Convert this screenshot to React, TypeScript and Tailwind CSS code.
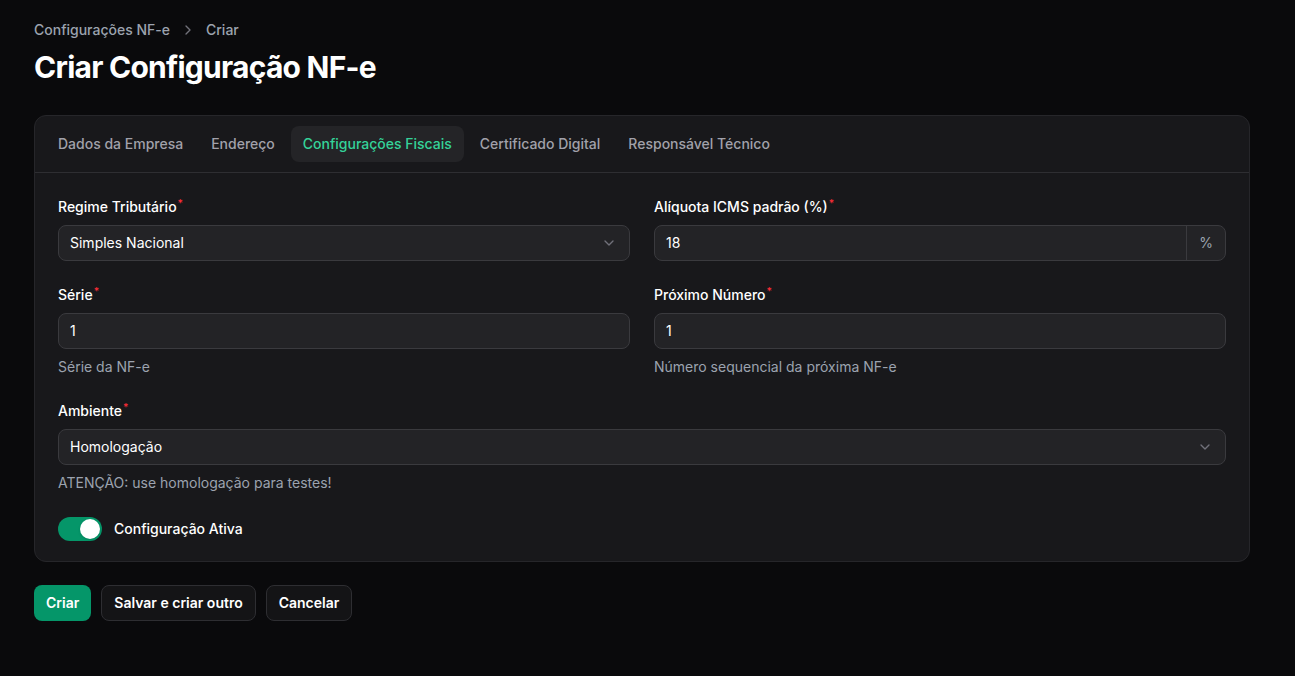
import React from 'react';
import { ChevronRight, ChevronDown } from 'lucide-react';

const tabs = ['Dados da Empresa', 'Endereço', 'Configurações Fiscais', 'Certificado Digital', 'Responsável Técnico'];

const Label: React.FC<{ text: string }> = ({ text }) => (
  <label className="block text-sm font-medium leading-5 text-white">
    {text}
    <sup className="ml-px font-medium text-red-500">*</sup>
  </label>
);

const Hint: React.FC<{ text: string }> = ({ text }) => (
  <p className="mt-2 text-sm leading-5 text-[#9ca3af]">{text}</p>
);

const SelectBox: React.FC<{ value: string }> = ({ value }) => (
  <div className="mt-2 flex h-9 items-center justify-between rounded-lg border border-[#3a3a3e] bg-[#232326] pl-[11px] pr-3">
    <span className="text-sm text-white">{value}</span>
    <ChevronDown className="h-4 w-4 text-[#71717a]" strokeWidth={2} />
  </div>
);

const TextBox: React.FC<{ value: string; suffix?: string }> = ({ value, suffix }) => (
  <div className="mt-2 flex h-9 items-stretch overflow-hidden rounded-lg border border-[#3a3a3e] bg-[#232326]">
    <div className="flex flex-1 items-center px-[11px] text-sm text-white">{value}</div>
    {suffix && (
      <div className="flex w-[39px] items-center justify-center border-l border-[#3a3a3e] text-sm text-[#9ca3af]">
        {suffix}
      </div>
    )}
  </div>
);

export default function App() {
  return (
    <div className="min-h-[676px] bg-[#0a0a0c] pl-[34px] pr-[45px] pt-5 font-['Inter',sans-serif] antialiased">
      <nav className="flex items-center gap-[10px] text-sm font-medium text-[#9ca3af]">
        <span>Configurações NF-e</span>
        <ChevronRight className="h-4 w-4 text-[#71717a]" />
        <span>Criar</span>
      </nav>
      <h1 className="mt-[9px] text-3xl font-bold tracking-tight text-white">Criar Configuração NF-e</h1>

      <div className="mt-[30px] rounded-xl border border-[#26262a] bg-[#18181b]">
        <div className="flex gap-1 border-b border-[#2e2e32] px-[11px] py-[10px]">
          {tabs.map((t, i) => (
            <div
              key={t}
              className={`rounded-lg px-3 py-2 text-sm font-medium leading-5 ${
                i === 2 ? 'bg-[#242427] text-[#34d399]' : 'text-[#a1a1aa]'
              }`}
            >
              {t}
            </div>
          ))}
        </div>

        <div className="px-[23px] pb-5 pt-6">
          <div className="grid grid-cols-2 gap-x-6 gap-y-6">
            <div>
              <Label text="Regime Tributário" />
              <SelectBox value="Simples Nacional" />
            </div>
            <div>
              <Label text="Alíquota ICMS padrão (%)" />
              <TextBox value="18" suffix="%" />
            </div>
            <div>
              <Label text="Série" />
              <TextBox value="1" />
              <Hint text="Série da NF-e" />
            </div>
            <div>
              <Label text="Próximo Número" />
              <TextBox value="1" />
              <Hint text="Número sequencial da próxima NF-e" />
            </div>
            <div className="col-span-2">
              <Label text="Ambiente" />
              <SelectBox value="Homologação" />
              <Hint text="ATENÇÃO: use homologação para testes!" />
            </div>
            <div className="col-span-2 flex items-center gap-3">
              <div className="flex h-6 w-11 items-center justify-end rounded-full bg-[#059669] px-0.5">
                <div className="h-5 w-5 rounded-full bg-white shadow" />
              </div>
              <span className="text-sm font-medium text-white">Configuração Ativa</span>
            </div>
          </div>
        </div>
      </div>

      <div className="mt-[23px] flex gap-[10px]">
        <button className="h-9 rounded-lg bg-[#059669] px-3 text-sm font-semibold text-white">Criar</button>
        <button className="h-9 rounded-lg border border-[#2e2e32] bg-[#141416] px-3 text-sm font-semibold text-white">
          Salvar e criar outro
        </button>
        <button className="h-9 rounded-lg border border-[#2e2e32] bg-[#141416] px-3 text-sm font-semibold text-white">
          Cancelar
        </button>
      </div>
    </div>
  );
}
